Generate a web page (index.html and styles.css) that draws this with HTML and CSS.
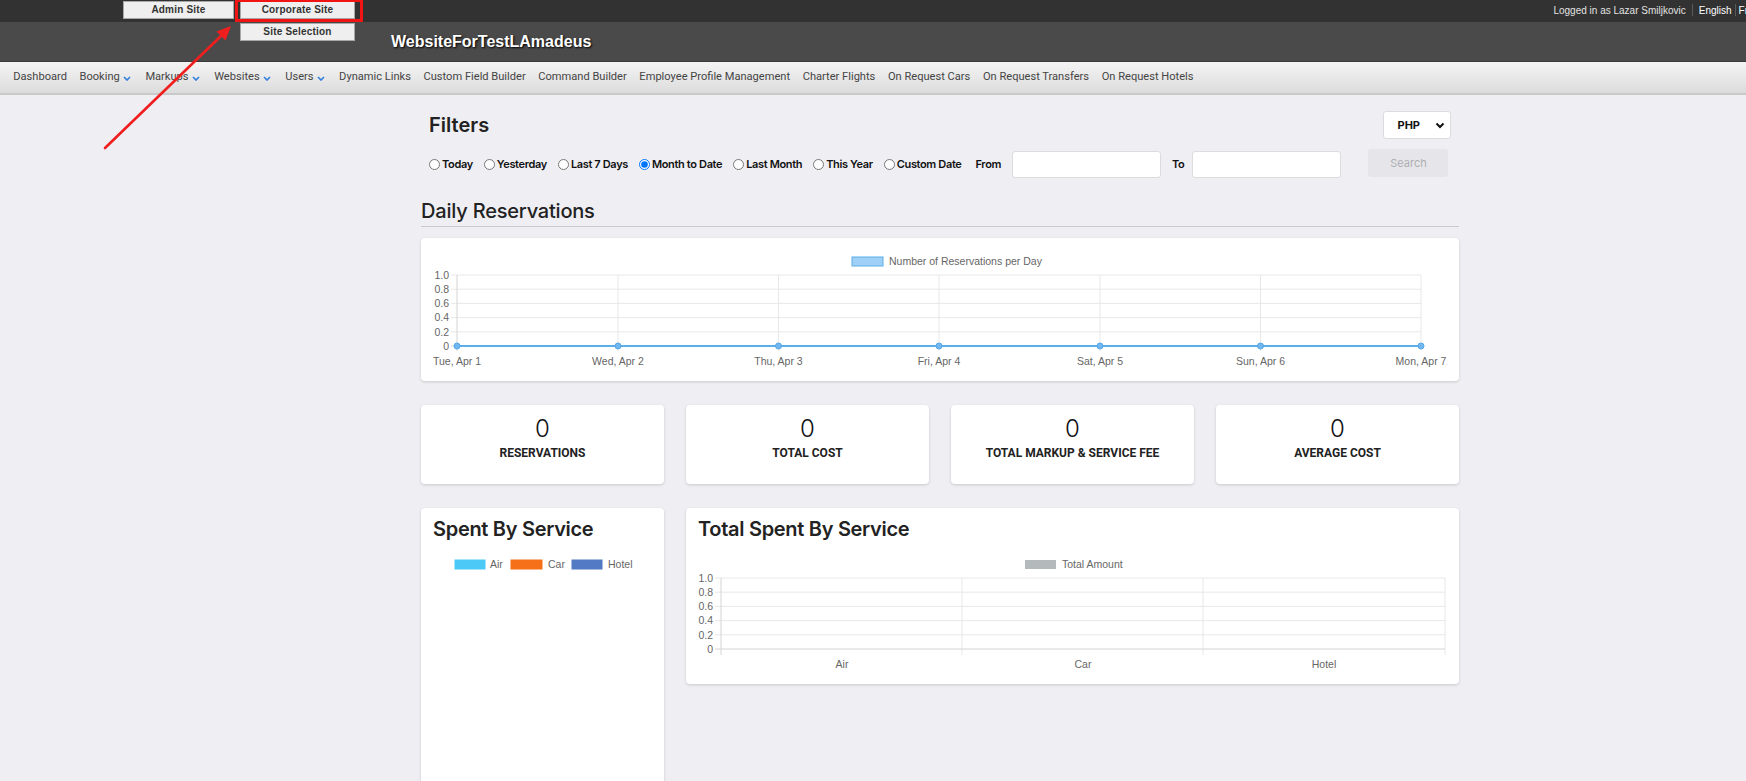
FILE: index.html
```html
<!DOCTYPE html>
<html lang="en">
<head>
<meta charset="utf-8">
<title>Dashboard</title>
<link rel="stylesheet" href="styles.css">
</head>
<body>
<div class="topbar">
  <div class="site-switch">
    <a class="site-btn admin-btn">Admin Site</a>
    <div class="corp-wrap">
      <a class="site-btn corp-btn">Corporate Site</a>
      <a class="site-btn site-dropdown">Site Selection</a>
      <div class="highlight"></div>
    </div>
  </div>
  <div class="user-links">
    <span class="logged">Logged in as Lazar Smiljkovic</span>
    <span class="sep"></span>
    <span class="lang">English</span>
    <span class="sep sep-narrow"></span>
    <span class="lang">Fr</span>
  </div>
</div>
<header class="header">
  <div class="brand">WebsiteForTestLAmadeus</div>
</header>
<nav class="nav">
  <a class="nav-item">Dashboard</a>
  <a class="nav-item">Booking <svg class="chev" viewBox="0 0 8 5"><polyline points="1,1 4,4 7,1"/></svg></a>
  <a class="nav-item">Markups <svg class="chev" viewBox="0 0 8 5"><polyline points="1,1 4,4 7,1"/></svg></a>
  <a class="nav-item">Websites <svg class="chev" viewBox="0 0 8 5"><polyline points="1,1 4,4 7,1"/></svg></a>
  <a class="nav-item">Users <svg class="chev" viewBox="0 0 8 5"><polyline points="1,1 4,4 7,1"/></svg></a>
  <a class="nav-item">Dynamic Links</a>
  <a class="nav-item">Custom Field Builder</a>
  <a class="nav-item">Command Builder</a>
  <a class="nav-item">Employee Profile Management</a>
  <a class="nav-item">Charter Flights</a>
  <a class="nav-item">On Request Cars</a>
  <a class="nav-item">On Request Transfers</a>
  <a class="nav-item">On Request Hotels</a>
</nav>

<svg class="annot-arrow" viewBox="0 0 260 160" width="260" height="160">
  <line x1="105" y1="148" x2="221" y2="36" stroke="#f01e1e" stroke-width="2.6" stroke-linecap="round"/>
  <polygon points="231,26 216.5,31.5 225.5,40.5" fill="#f01e1e"/>
</svg>

<main class="content">
  <div class="filters-head">
    <h2 class="filters-title">Filters</h2>
    <div class="currency">PHP <svg class="cur-chev" viewBox="0 0 10 7"><polyline points="1.5,1.5 5,5 8.5,1.5"/></svg></div>
  </div>
  <div class="filters-row">
    <label class="radio"><input type="radio" name="range">Today</label>
    <label class="radio"><input type="radio" name="range">Yesterday</label>
    <label class="radio"><input type="radio" name="range">Last 7 Days</label>
    <label class="radio"><input type="radio" name="range" checked>Month to Date</label>
    <label class="radio"><input type="radio" name="range">Last Month</label>
    <label class="radio"><input type="radio" name="range">This Year</label>
    <label class="radio"><input type="radio" name="range">Custom Date</label>
    <span class="field-label from-label">From</span>
    <input class="date-input from-input" type="text">
    <span class="field-label to-label">To</span>
    <input class="date-input to-input" type="text">
    <button class="search-btn" type="button">Search</button>
  </div>

  <h2 class="section-title">Daily Reservations</h2>

  <div class="card chart-card">
    <svg class="chart" viewBox="0 0 1038 143" width="1038" height="143">
      <rect x="431" y="19" width="31" height="9" fill="#9fd0f5" stroke="#5aaeea" stroke-width="1"/>
      <text x="468" y="27" class="legend-text">Number of Reservations per Day</text>
      <g class="grid">
        <line x1="30" y1="37" x2="1000" y2="37"/>
        <line x1="30" y1="51.2" x2="1000" y2="51.2"/>
        <line x1="30" y1="65.4" x2="1000" y2="65.4"/>
        <line x1="30" y1="79.6" x2="1000" y2="79.6"/>
        <line x1="30" y1="93.8" x2="1000" y2="93.8"/>
        <line x1="197" y1="37" x2="197" y2="113"/>
        <line x1="357.5" y1="37" x2="357.5" y2="113"/>
        <line x1="518" y1="37" x2="518" y2="113"/>
        <line x1="679" y1="37" x2="679" y2="113"/>
        <line x1="839.5" y1="37" x2="839.5" y2="113"/>
        <line x1="1000" y1="37" x2="1000" y2="113"/>
      </g>
      <g class="axis">
        <line x1="36" y1="37" x2="36" y2="113"/>
        <line x1="30" y1="108" x2="1000" y2="108"/>
      </g>
      <g class="tick-text" text-anchor="end">
        <text x="28" y="41">1.0</text>
        <text x="28" y="55">0.8</text>
        <text x="28" y="69">0.6</text>
        <text x="28" y="83">0.4</text>
        <text x="28" y="97.5">0.2</text>
        <text x="28" y="111.5">0</text>
      </g>
      <line x1="36" y1="108" x2="1000" y2="108" stroke="#5aaeea" stroke-width="2"/>
      <g class="points">
        <circle cx="36" cy="108" r="3"/>
        <circle cx="197" cy="108" r="3"/>
        <circle cx="357.5" cy="108" r="3"/>
        <circle cx="518" cy="108" r="3"/>
        <circle cx="679" cy="108" r="3"/>
        <circle cx="839.5" cy="108" r="3"/>
        <circle cx="1000" cy="108" r="3"/>
      </g>
      <g class="tick-text" text-anchor="middle">
        <text x="36" y="127">Tue, Apr 1</text>
        <text x="197" y="127">Wed, Apr 2</text>
        <text x="357.5" y="127">Thu, Apr 3</text>
        <text x="518" y="127">Fri, Apr 4</text>
        <text x="679" y="127">Sat, Apr 5</text>
        <text x="839.5" y="127">Sun, Apr 6</text>
        <text x="1000" y="127">Mon, Apr 7</text>
      </g>
    </svg>
  </div>

  <div class="stats">
    <div class="card stat"><div class="stat-value">0</div><div class="stat-label">Reservations</div></div>
    <div class="card stat"><div class="stat-value">0</div><div class="stat-label">Total Cost</div></div>
    <div class="card stat"><div class="stat-value">0</div><div class="stat-label">Total Markup &amp; Service Fee</div></div>
    <div class="card stat"><div class="stat-value">0</div><div class="stat-label">Average Cost</div></div>
  </div>

  <div class="bottom-row">
    <div class="card service-card">
      <h3 class="card-title">Spent By Service</h3>
      <svg class="chart" viewBox="0 0 243 60" width="243" height="60">
        <rect x="34" y="19" width="30" height="9" fill="#4dc9f6" stroke="#4dc9f6"/>
        <text x="69" y="27" class="legend-text">Air</text>
        <rect x="90" y="19" width="31" height="9" fill="#f67019" stroke="#f67019"/>
        <text x="127" y="27" class="legend-text">Car</text>
        <rect x="151" y="19" width="30" height="9" fill="#537bc4" stroke="#537bc4"/>
        <text x="187" y="27" class="legend-text">Hotel</text>
      </svg>
    </div>
    <div class="card total-card">
      <h3 class="card-title">Total Spent By Service</h3>
      <svg class="chart" viewBox="0 0 773 143" width="773" height="143">
        <rect x="339" y="19" width="31" height="9" fill="#b4babc"/>
        <text x="376" y="27" class="legend-text">Total Amount</text>
        <g class="grid">
          <line x1="29" y1="37" x2="759" y2="37"/>
          <line x1="29" y1="51.2" x2="759" y2="51.2"/>
          <line x1="29" y1="65.4" x2="759" y2="65.4"/>
          <line x1="29" y1="79.6" x2="759" y2="79.6"/>
          <line x1="29" y1="93.8" x2="759" y2="93.8"/>
          <line x1="276" y1="37" x2="276" y2="114"/>
          <line x1="517" y1="37" x2="517" y2="114"/>
          <line x1="759" y1="37" x2="759" y2="114"/>
        </g>
        <g class="axis">
          <line x1="35" y1="37" x2="35" y2="114"/>
          <line x1="29" y1="108" x2="759" y2="108"/>
        </g>
        <g class="tick-text" text-anchor="end">
          <text x="27" y="41">1.0</text>
          <text x="27" y="55">0.8</text>
          <text x="27" y="69">0.6</text>
          <text x="27" y="83">0.4</text>
          <text x="27" y="97.5">0.2</text>
          <text x="27" y="111.5">0</text>
        </g>
        <g class="tick-text" text-anchor="middle">
          <text x="156" y="127">Air</text>
          <text x="397" y="127">Car</text>
          <text x="638" y="127">Hotel</text>
        </g>
      </svg>
    </div>
  </div>
</main>
</body>
</html>
```
FILE: styles.css
```css
* { box-sizing: border-box; }
html, body { margin: 0; padding: 0; height: 100%; overflow: hidden; }
body {
  background: #efeff3;
  font-family: Roboto, "Liberation Sans", Arial, sans-serif;
  color: #222;
  position: relative;
}

/* ---------- top bar ---------- */
.topbar {
  height: 22px;
  background: #323232;
  display: flex;
  align-items: flex-start;
  padding-left: 123px;
  position: relative;
  z-index: 3;
}
.site-switch { display: flex; }
.site-btn {
  display: block;
  height: 18px;
  margin-top: 1px;
  background: #efefef;
  border: 1px solid #a8a8a8;
  font: bold 10px "Liberation Sans", Arial, sans-serif;
  color: #333;
  text-align: center;
  line-height: 16px;
  letter-spacing: 0.2px;
}
.admin-btn { width: 111px; }
.corp-wrap { position: relative; margin-left: 6px; }
.corp-btn { width: 115px; }
.site-dropdown {
  position: absolute;
  left: 0;
  top: 23px;
  width: 115px;
  margin: 0;
}
.highlight {
  position: absolute;
  left: -5px;
  top: -1px;
  width: 128px;
  height: 23px;
  border: 3px solid #f01414;
}
.user-links {
  margin-left: auto;
  margin-right: -2px;
  display: flex;
  align-items: center;
  height: 20px;
  white-space: nowrap;
  font: 10px "Liberation Sans", Arial, sans-serif;
}
.logged { color: #e2e2e2; }
.lang { color: #ffffff; }
.sep {
  display: inline-block;
  width: 1px;
  height: 12px;
  background: #5a5a5a;
  margin: 0 6px;
}
.sep-narrow { margin: 0 3px; }

/* ---------- header ---------- */
.header {
  height: 40px;
  background: #4a4a4a;
  border-bottom: 1px solid #3a3a3a;
  padding-left: 391px;
  display: flex;
  align-items: center;
}
.brand {
  font: bold 16px "Liberation Sans", Arial, sans-serif;
  color: #fff;
  text-shadow: 1px 1px 2px #000;
}

/* ---------- nav ---------- */
.nav {
  height: 33px;
  background: linear-gradient(#f4f4f4, #dcdcdc);
  border-bottom: 2px solid #c9c9c9;
  display: flex;
  align-items: center;
  padding-left: 7px;
}
.nav-item {
  font-size: 11.1px;
  color: #454545;
  padding: 0 6.3px;
  display: flex;
  align-items: center;
  white-space: nowrap;
  margin-top: -2px;
}
.chev {
  width: 8px;
  height: 5px;
  margin-left: 3.5px;
  margin-right: 1.5px;
  margin-top: 3px;
  fill: none;
  stroke: #2f7ddc;
  stroke-width: 1.6;
}

/* ---------- annotation ---------- */
.annot-arrow {
  position: absolute;
  left: 0;
  top: 0;
  z-index: 5;
  pointer-events: none;
}

/* ---------- content ---------- */
.content {
  width: 1038px;
  margin-left: 421px;
}
.filters-head {
  display: flex;
  justify-content: space-between;
  align-items: center;
  height: 28px;
  margin-top: 16px;
  padding: 0 8px;
}
.filters-title {
  margin: 0;
  font: 600 20px Inter, "Liberation Sans", sans-serif;
  color: #222;
}
.currency {
  width: 68px;
  height: 28px;
  background: #fff;
  border: 1px solid #dcdcdc;
  border-radius: 3px;
  display: flex;
  align-items: center;
  justify-content: flex-end;
  padding-right: 5px;
  font: 700 11px Inter, "Liberation Sans", sans-serif;
  color: #111;
}
.cur-chev {
  width: 10px;
  height: 7px;
  margin-left: 15px;
  fill: none;
  stroke: #111;
  stroke-width: 2;
}
.filters-row {
  display: flex;
  align-items: center;
  height: 28px;
  margin-top: 11px;
  padding-left: 8px;
  white-space: nowrap;
}
.filters-row > * { flex-shrink: 0; }
.radio {
  display: flex;
  align-items: center;
  font: 600 11px Inter, "Liberation Sans", sans-serif;
  letter-spacing: -0.35px;
  color: #111;
  margin-right: 11px;
}
.radio input {
  width: 11px;
  height: 11px;
  margin: 0 2px 0 0;
}
.field-label {
  font: 600 11px Inter, "Liberation Sans", sans-serif;
  letter-spacing: -0.35px;
  color: #111;
}
.from-label { margin-left: 3px; }
.to-label { margin-left: 11px; }
.date-input {
  width: 149px;
  height: 27px;
  background: #fff;
  border: 1px solid #dcdcdc;
  border-radius: 3px;
}
.from-input { margin-left: 11px; }
.to-input { margin-left: 8px; }
.search-btn {
  width: 80px;
  height: 28px;
  margin-left: 27px;
  margin-top: -3px;
  background: #e6e6ea;
  border: none;
  border-radius: 3px;
  color: #aeaeb3;
  font: 400 11px Inter, "Liberation Sans", sans-serif;
}
.section-title {
  margin: 21px 0 0;
  font: 500 20px Inter, "Liberation Sans", sans-serif;
  letter-spacing: -0.2px;
  line-height: 24px;
  color: #222;
  padding-bottom: 3px;
  border-bottom: 1px solid #c9c9cf;
}
.card {
  background: #fff;
  border-radius: 4px;
  box-shadow: 0 1px 3px rgba(0, 0, 0, 0.16);
}
.chart-card {
  margin-top: 11px;
  height: 143px;
}
.chart { display: block; }
.chart .grid line { stroke: #e8e8e8; stroke-width: 1; }
.chart .axis line { stroke: #d4d4d4; stroke-width: 1; }
.chart .points circle { fill: #72b8ee; stroke: #55a6e6; stroke-width: 1; }
.tick-text text, .legend-text {
  font-family: "Liberation Sans", Arial, sans-serif;
  font-size: 10.5px;
  fill: #666;
}

.stats {
  display: grid;
  grid-template-columns: repeat(4, 1fr);
  gap: 22px;
  margin-top: 24px;
}
.stat {
  height: 79px;
  text-align: center;
  padding-top: 10px;
}
.stat-value {
  font: 300 24px Inter, "Liberation Sans", sans-serif;
  color: #111;
  line-height: 28px;
}
.stat-label {
  margin-top: 3px;
  font: 700 12px Roboto, "Liberation Sans", sans-serif;
  text-transform: uppercase;
  color: #222;
}

.bottom-row {
  display: flex;
  gap: 22px;
  margin-top: 24px;
  align-items: flex-start;
}
.service-card {
  width: 243px;
  height: 300px;
}
.total-card {
  flex: 1;
  height: 176px;
}
.card-title {
  margin: 0;
  padding: 9px 13px 0 12px;
  height: 33px;
  font: 600 20px Inter, "Liberation Sans", sans-serif;
  letter-spacing: -0.3px;
  line-height: 24px;
  color: #222;
}
```
